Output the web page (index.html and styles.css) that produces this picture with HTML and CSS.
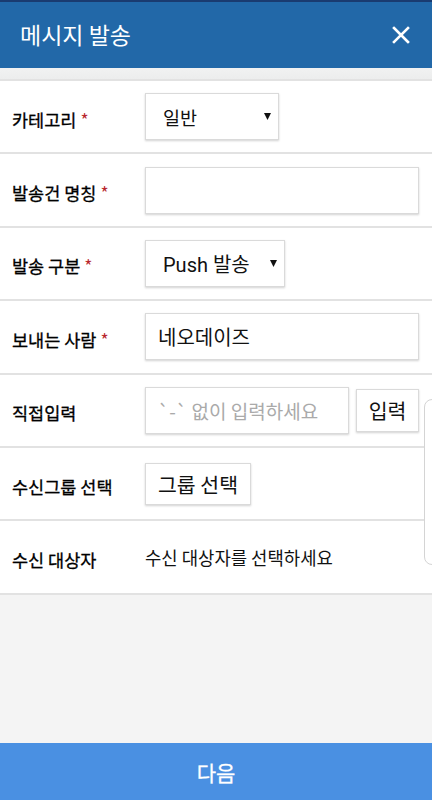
FILE: index.html
```html
<!DOCTYPE html>
<html>
  <head>
    <meta charset="utf-8">
    <title>메시지 발송</title>
    <link rel="stylesheet" href="styles.css">
</head>
<body>
  <div class="header">
    <h1>메시지 발송</h1>
    <span class="close">
      <svg width="20" height="20" viewBox="0 0 20 20"><path d="M3 3L17 17M17 3L3 17" stroke="#fff" stroke-width="2.6" stroke-linecap="square"/></svg>
    </span>
  </div>
  <div class="band"></div>

  <div class="form">
    <div class="row">
      <label>카테고리<span class="req">*</span></label>
      <div class="select sel-small"><span>일반</span><svg class="arrow" width="7" height="7" viewBox="0 0 7 7"><path d="M0 0H7L3.5 7Z" fill="#111"/></svg></div>
    </div>
    <div class="row">
      <label>발송건 명칭<span class="req">*</span></label>
      <div class="input full"></div>
    </div>
    <div class="row">
      <label>발송 구분<span class="req">*</span></label>
      <div class="select sel-push"><span class="latin">Push 발송</span><svg class="arrow" width="7" height="7" viewBox="0 0 7 7"><path d="M0 0H7L3.5 7Z" fill="#111"/></svg></div>
    </div>
    <div class="row">
      <label>보내는 사람<span class="req">*</span></label>
      <div class="input full">네오데이즈</div>
    </div>
    <div class="row">
      <label>직접입력</label>
      <div class="input phone"><span class="placeholder">`-` 없이 입력하세요</span></div>
      <div class="btn btn-input">입력</div>
    </div>
    <div class="row">
      <label>수신그룹 선택</label>
      <div class="btn btn-group">그룹 선택</div>
    </div>
    <div class="row">
      <label>수신 대상자</label>
      <div class="plain">수신 대상자를 선택하세요</div>
    </div>
  </div>

  <div class="side-panel"></div>

  <div class="footer">다음</div>
</body>
</html>
```

FILE: styles.css
```css
body {
  margin: 0;
  font-family: "Noto Sans CJK KR", "Noto Sans", sans-serif;
  background-color: #f4f4f4;
  color: #111;
  height: 800px;
  overflow: hidden;
  position: relative;
}

.header {
  height: 66px;
  background-color: #2268a8;
  border-top: 2px solid #1a3b70;
  display: flex;
  align-items: center;
  justify-content: space-between;
  padding: 0 21px 0 20px;
}

.header h1 {
  margin: 0;
  font-size: 23px;
  font-weight: normal;
  color: #fff;
  position: relative;
  top: -1px;
}

.close {
  display: flex;
}

.band {
  height: 11px;
  background: linear-gradient(#f1f2f2, #eceded);
  border-bottom: 2px solid #e2e2e2;
}

.form {
  background-color: #fff;
}

.row {
  height: 71.4px;
  border-bottom: 2px solid #e2e2e2;
  display: flex;
  align-items: center;
  padding: 0 13px 0 12px;
}

.row label {
  width: 133px;
  font-size: 17.5px;
  padding-top: 5px;
  color: #000;
  -webkit-text-stroke: 0.3px #000;
}

.req {
  color: #b8262c;
  margin-left: 4px;
  -webkit-text-stroke: 0;
}

.select,
.input,
.btn {
  box-sizing: border-box;
  height: 47px;
  background-color: #fff;
  border: 1px solid #dadada;
  box-shadow: 0 1px 2px rgba(0, 0, 0, 0.18);
  display: flex;
  align-items: center;
  font-size: 18.5px;
}

.select {
  justify-content: space-between;
  padding: 0 7px 0 17px;
}

.latin {
  font-family: Roboto, "Noto Sans CJK KR", sans-serif;
  font-size: 20px;
}

.sel-small {
  width: 134px;
}

.sel-push {
  width: 140px;
}

.input {
  padding: 0 12px;
  font-size: 20px;
}

.full {
  flex: 1;
}

.phone {
  width: 205px;
}

.placeholder {
  color: #aaa;
  font-size: 19px;
}

.btn {
  justify-content: center;
  font-size: 20.5px;
}

.btn-input {
  width: 63px;
  height: 43px;
  margin-left: 7px;
}

.btn-group {
  width: 106px;
  height: 42px;
}

.plain {
  font-size: 17.8px;
}

.side-panel {
  position: absolute;
  left: 424px;
  top: 399px;
  width: 20px;
  height: 164px;
  border: 1px solid #d4d4d4;
  border-radius: 8px;
  background-color: #fff;
}

.footer {
  position: absolute;
  left: 0;
  right: 0;
  bottom: 0;
  height: 57px;
  background-color: #4a90e2;
  color: #fff;
  font-size: 21px;
  -webkit-text-stroke: 0.3px #fff;
  display: flex;
  align-items: center;
  justify-content: center;
}
```
